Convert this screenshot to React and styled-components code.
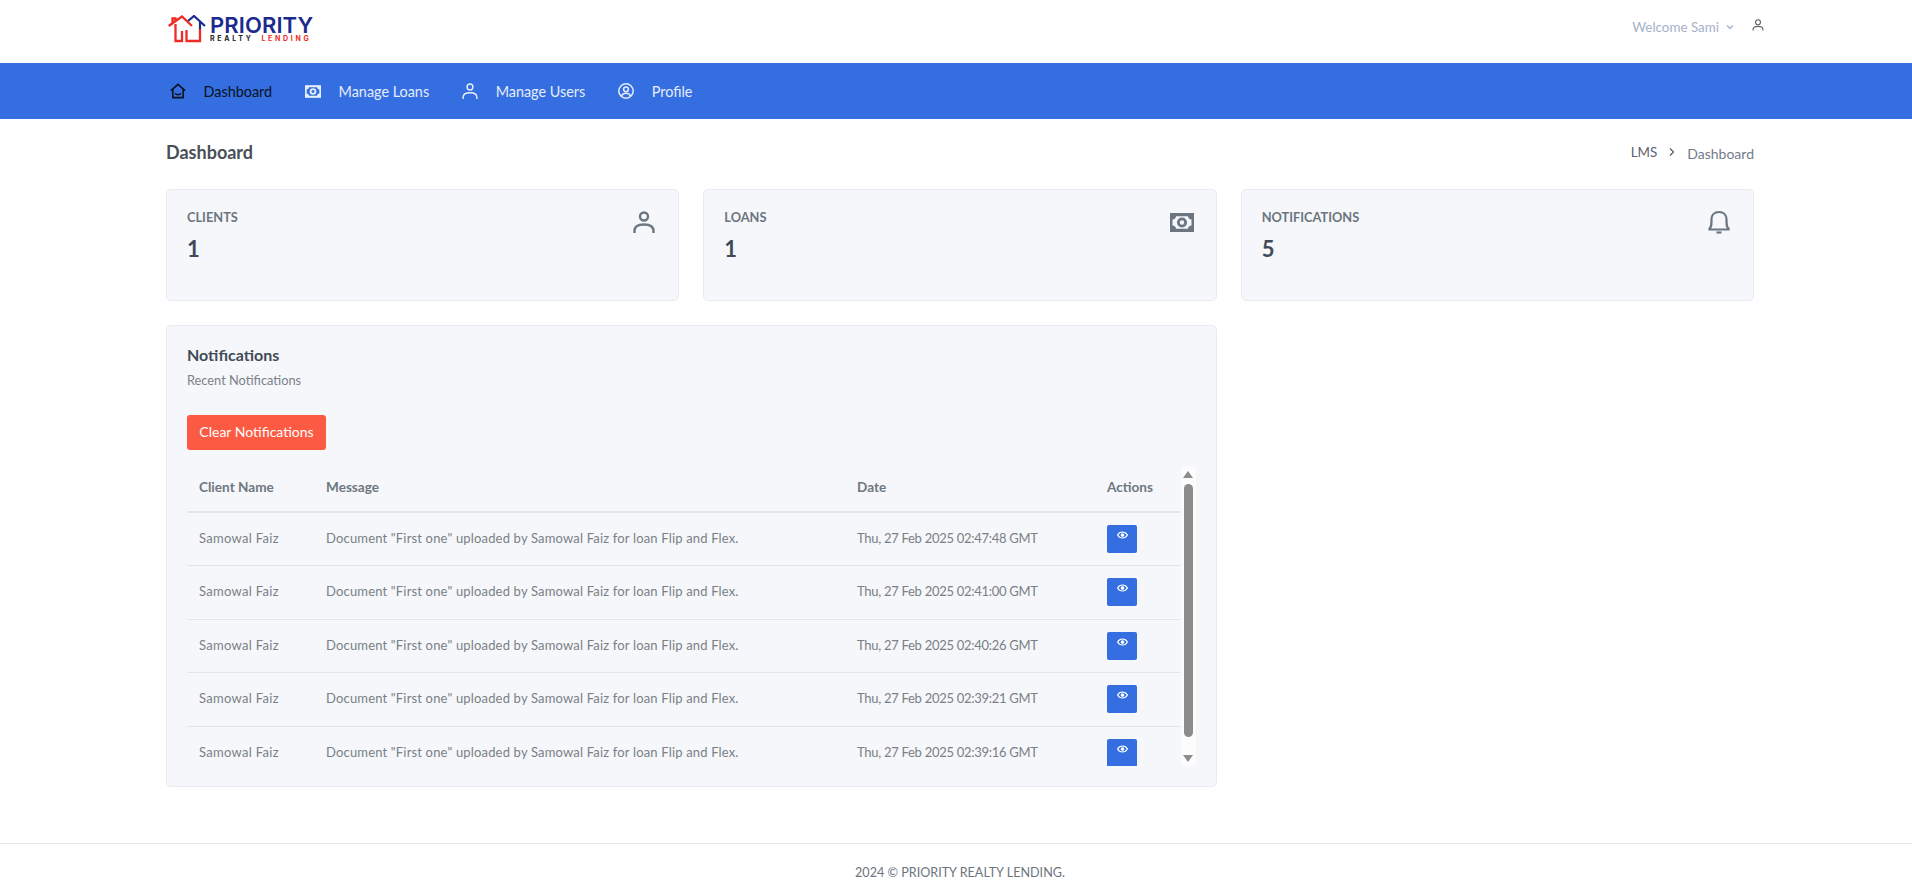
import styled, { createGlobalStyle } from "styled-components";

const GlobalStyle = createGlobalStyle`
  * {
    box-sizing: border-box;
  }
  html, body {
    margin: 0;
    padding: 0;
    background: #fff;
    font-family: "Lato", "Noto Sans", sans-serif;
    color: #6c757d;
  }
`;

const BLUE = "#346ee0";

const Container = styled.div`
  width: 1588px;
  margin-left: 166px;
`;

const TopBar = styled.header`
  height: 63px;
  background: #fff;
`;

const TopRow = styled(Container)`
  height: 100%;
  display: flex;
  align-items: center;
  justify-content: space-between;
`;

const Logo = styled.div`
  display: flex;
  align-items: flex-start;
  gap: 4px;
  margin-left: 2px;
  margin-bottom: 5px;
`;

const LogoWords = styled.div`
  display: flex;
  flex-direction: column;
  margin-top: 1px;
`;

const LogoTitle = styled.span`
  font-family: "Inter", sans-serif;
  font-size: 22px;
  line-height: 18px;
  font-weight: 600;
  letter-spacing: 0.1px;
  color: #1b2a8e;
`;

const LogoSub = styled.span`
  font-family: "Inter", sans-serif;
  font-size: 7px;
  line-height: 8px;
  font-weight: 700;
  letter-spacing: 2.7px;
  color: #222;
  margin-top: 1px;

  b {
    color: #ee2b25;
    font-weight: 700;
    margin-left: 8px;
  }
`;

const UserArea = styled.div`
  display: flex;
  align-items: center;
  margin-right: -10px;
  padding-bottom: 9px;
  color: #a5b1ca;
  font-size: 13.4px;
`;

const Welcome = styled.span`
  margin-right: 6px;
`;

const UserIcon = styled.span`
  display: flex;
  margin-left: 17px;
  margin-top: -5px;
`;

const NavBar = styled.nav`
  height: 56px;
  background: ${BLUE};
`;

const NavRow = styled(Container)`
  height: 100%;
  display: flex;
  align-items: center;
  padding-left: 4px;
`;

const NavItem = styled.a`
  display: flex;
  align-items: center;
  gap: 17.5px;
  margin-right: 33px;
  font-size: 14.4px;
  color: ${({ $active }) => ($active ? "#0b1220" : "#e6edfb")};
`;

const TitleRow = styled(Container)`
  height: 70px;
  display: flex;
  align-items: center;
  justify-content: space-between;
  padding-bottom: 4px;
`;

const PageTitle = styled.h1`
  margin: 0;
  font-size: 18px;
  font-weight: 700;
  color: #495057;
`;

const Crumbs = styled.div`
  display: flex;
  align-items: center;
  font-size: 14px;
  gap: 11px;
`;

const CrumbRoot = styled.span`
  font-size: 13.4px;
  color: #5c6470;
`;

const CrumbLast = styled.span`
  color: #727b8a;
  margin-top: 2px;
`;

const Grid = styled(Container)`
  display: grid;
  grid-template-columns: repeat(3, 1fr);
  column-gap: 24px;
  row-gap: 24px;
  align-items: start;
`;

const Card = styled.section`
  background: #f5f7fb;
  border: 1px solid #e8ebf2;
  border-radius: 5px;
`;

const StatCard = styled(Card)`
  height: 112px;
  padding: 20px;
  display: flex;
  justify-content: space-between;
  align-items: flex-start;
`;

const StatLabel = styled.div`
  font-size: 12.8px;
  line-height: 16px;
  font-weight: 700;
  color: #6c757d;
  margin-top: -1px;
`;

const StatValue = styled.div`
  font-size: 22px;
  line-height: 26px;
  font-weight: 700;
  color: #414b57;
  margin-top: 11px;
`;

const StatIcon = styled.div`
  display: flex;
  color: #6b7680;
  margin-top: ${({ $top }) => $top}px;
  margin-right: ${({ $right }) => $right}px;
`;

const TableCard = styled(Card)`
  grid-column: span 2;
  height: 462px;
  padding: 19px 20px 20px;
`;

const CardTitle = styled.h2`
  margin: 0;
  font-size: 16px;
  line-height: 20px;
  font-weight: 700;
  color: #414b57;
`;

const CardSub = styled.p`
  margin: 6px 0 0;
  font-size: 12.8px;
  line-height: 18px;
  color: #7a828a;
`;

const ClearButton = styled.button`
  display: block;
  width: 139px;
  height: 35px;
  margin-top: 26px;
  padding: 0 0 2px;
  border: 0;
  border-radius: 3px;
  background: #fd5a43;
  color: #fff;
  font-family: inherit;
  font-size: 14px;
`;

const TableWrap = styled.div`
  display: flex;
  height: 300px;
  margin-top: 16px;
`;

const Viewport = styled.div`
  flex: 1;
  overflow: hidden;
`;

const Table = styled.table`
  width: 100%;
  border-collapse: collapse;
  table-layout: fixed;

  tbody tr:nth-child(odd) td {
    height: 53px;
  }
`;

const HeadCell = styled.th`
  height: 46px;
  padding: 0 12px 3px;
  text-align: left;
  font-size: 13.6px;
  font-weight: 700;
  color: #6f7780;
  border-bottom: 2px solid #e2e5ea;
`;

const Cell = styled.td`
  height: 54px;
  padding: 0 12px 2px;
  font-size: 13px;
  letter-spacing: ${({ $spacing }) => $spacing}px;
  color: #7a8085;
  border-bottom: 1px solid #e2e5ea;
`;

const EyeButton = styled.button`
  display: flex;
  justify-content: center;
  width: 30px;
  height: 28px;
  margin-top: 2px;
  padding: 6px 0 0;
  border: 0;
  border-radius: 2px;
  background: ${BLUE};
  color: #fff;
`;

const ScrollTrack = styled.div`
  width: 15px;
  display: flex;
  flex-direction: column;
  align-items: center;
  background: #fcfcfc;
`;

const ScrollThumb = styled.div`
  flex: 1;
  width: 9px;
  margin: 6.5px 0 17.5px;
  border-radius: 5px;
  background: #8c8c8c;
`;

const ScrollArrow = styled.div`
  width: 0;
  height: 0;
  margin: ${({ $down }) => ($down ? "0 0 4.5px" : "4.5px 0 0")};
  border-left: 5px solid transparent;
  border-right: 5px solid transparent;
  ${({ $down }) =>
    $down ? "border-top: 7px solid #8c8c8c;" : "border-bottom: 7px solid #8c8c8c;"}
`;

const Footer = styled.footer`
  margin-top: 56px;
  height: 53px;
  padding: 4px 0 0 8px;
  border-top: 1px solid #e3e5e9;
  display: flex;
  align-items: center;
  justify-content: center;
  font-size: 12.6px;
  color: #6c757d;
`;

const HouseLogo = () => (
  <svg width="38" height="28" viewBox="0 0 38 28" fill="none">
    <path d="M20 6 L26 1 L37 11 M32 7 V15" stroke="#1b2a8e" strokeWidth="2.2" />
    <path
      d="M0.7 11 L14 1.5 L24 11 M4.5 8 V3.5 H7.5 V6 M7.5 9 V26 H14 V16 M18.5 15 V26 H32 V14"
      stroke="#ee2b25"
      strokeWidth="2.3"
    />
  </svg>
);

const HomeSmile = () => (
  <svg width="16" height="16" viewBox="0 0 17 16" fill="none" stroke="#0b1220" strokeWidth="1.7">
    <path d="M1 7.5 L8.5 1 L16 7.5 M3 6.5 V15 H14 V6.5" />
    <path d="M5.5 10.5 C6.8 12.5 10.2 12.5 11.5 10.5" />
  </svg>
);

const Money = ({ width, height, color, hole }) => (
  <svg width={width} height={height} viewBox="0 0 24 19">
    <rect width="24" height="19" fill={color} />
    <path
      d="M6 3.3 H18 C18 5 19.5 6.5 21.5 6.5 V12.5 C19.5 12.5 18 14 18 15.7 H6 C6 14 4.5 12.5 2.5 12.5 V6.5 C4.5 6.5 6 5 6 3.3 Z"
      fill={hole}
    />
    <circle cx="12" cy="9.5" r="5" fill={color} />
    <circle cx="12" cy="9.5" r="2.2" fill={hole} />
  </svg>
);

const Person = ({ size, strokeWidth = 2 }) => (
  <svg width={size} height={size} viewBox="0 0 22 22" fill="none" stroke="currentColor" strokeWidth={strokeWidth}>
    <circle cx="11" cy="5.5" r="4" />
    <path d="M1.5 22 V20 C1.5 15.5 5 13.5 11 13.5 C17 13.5 20.5 15.5 20.5 20 V22" />
  </svg>
);

const ProfileCircle = () => (
  <svg width="16" height="16" viewBox="0 0 16 16" fill="none" stroke="#e6edfb" strokeWidth="1.5">
    <circle cx="8" cy="8" r="7.2" />
    <circle cx="8" cy="6.3" r="2.4" />
    <path d="M3.6 13 C4.5 10.8 6 10.3 8 10.3 C10 10.3 11.5 10.8 12.4 13" />
  </svg>
);

const Bell = () => (
  <svg width="22" height="24" viewBox="0 0 22 24" fill="none" stroke="currentColor" strokeWidth="2.2">
    <path d="M1.5 18.5 C3.5 17 3.5 15 3.5 9.5 C3.5 5 6.5 2 11 2 C15.5 2 18.5 5 18.5 9.5 C18.5 15 18.5 17 20.5 18.5 V19.5 H1.5 Z" />
    <path d="M8.5 22.5 H13.5" />
  </svg>
);

const Eye = () => (
  <svg width="11" height="8" viewBox="0 0 11 8" fill="none" stroke="currentColor" strokeWidth="1.2">
    <path d="M0.6 4 C2.8 0 8.2 0 10.4 4 C8.2 8 2.8 8 0.6 4 Z" />
    <circle cx="5.5" cy="4" r="1.2" fill="currentColor" />
  </svg>
);

const Chevron = ({ color, size }) => (
  <svg width={size} height={size} viewBox="0 0 10 10" fill="none" stroke={color} strokeWidth="1.4">
    <path d="M2 3.5 L5 6.5 L8 3.5" />
  </svg>
);

const ChevronRight = () => (
  <svg width="8" height="10" viewBox="0 0 8 10" fill="none" stroke="#5c6470" strokeWidth="1.3">
    <path d="M2 1.5 L5.5 5 L2 8.5" />
  </svg>
);

const navItems = [
  { label: "Dashboard", icon: <HomeSmile />, active: true },
  { label: "Manage Loans", icon: <Money width={16} height={13} color="#e6edfb" hole={BLUE} /> },
  { label: "Manage Users", icon: <Person size={16} strokeWidth={2} /> },
  { label: "Profile", icon: <ProfileCircle /> },
];

const dates = [
  "Thu, 27 Feb 2025 02:47:48 GMT",
  "Thu, 27 Feb 2025 02:41:00 GMT",
  "Thu, 27 Feb 2025 02:40:26 GMT",
  "Thu, 27 Feb 2025 02:39:21 GMT",
  "Thu, 27 Feb 2025 02:39:16 GMT",
];

const App = () => {
  return (
    <>
      <GlobalStyle />
      <TopBar>
        <TopRow>
          <Logo>
            <HouseLogo />
            <LogoWords>
              <LogoTitle>PRIORITY</LogoTitle>
              <LogoSub>
                REALTY<b>LENDING</b>
              </LogoSub>
            </LogoWords>
          </Logo>
          <UserArea>
            <Welcome>Welcome Sami</Welcome>
            <Chevron color="#a5b1ca" size={10} />
            <UserIcon>
              <svg width="12" height="12" viewBox="0 0 22 22" fill="none" stroke="#5a6068" strokeWidth="2">
                <circle cx="11" cy="6" r="4.5" />
                <path d="M2 21 V19 C2 15.5 6 13.5 11 13.5 C16 13.5 20 15.5 20 19 V21" />
              </svg>
            </UserIcon>
          </UserArea>
        </TopRow>
      </TopBar>

      <NavBar>
        <NavRow>
          {navItems.map((item) => (
            <NavItem key={item.label} $active={item.active}>
              {item.icon}
              <span>{item.label}</span>
            </NavItem>
          ))}
        </NavRow>
      </NavBar>

      <TitleRow>
        <PageTitle>Dashboard</PageTitle>
        <Crumbs>
          <CrumbRoot>LMS</CrumbRoot>
          <ChevronRight />
          <CrumbLast>Dashboard</CrumbLast>
        </Crumbs>
      </TitleRow>

      <Grid>
        <StatCard>
          <div>
            <StatLabel>CLIENTS</StatLabel>
            <StatValue>1</StatValue>
          </div>
          <StatIcon $top={1} $right={3}>
            <Person size={22} strokeWidth={2.4} />
          </StatIcon>
        </StatCard>
        <StatCard>
          <div>
            <StatLabel>LOANS</StatLabel>
            <StatValue>1</StatValue>
          </div>
          <StatIcon $top={3} $right={2}>
            <Money width={24} height={19} color="#6b7680" hole="#f5f7fb" />
          </StatIcon>
        </StatCard>
        <StatCard>
          <div>
            <StatLabel>NOTIFICATIONS</StatLabel>
            <StatValue>5</StatValue>
          </div>
          <StatIcon $top={0} $right={3}>
            <Bell />
          </StatIcon>
        </StatCard>

        <TableCard>
          <CardTitle>Notifications</CardTitle>
          <CardSub>Recent Notifications</CardSub>
          <ClearButton>Clear Notifications</ClearButton>
          <TableWrap>
            <Viewport>
              <Table>
                <colgroup>
                  <col width="127" />
                  <col width="531" />
                  <col width="250" />
                  <col width="86" />
                </colgroup>
                <thead>
                  <tr>
                    <HeadCell>Client Name</HeadCell>
                    <HeadCell>Message</HeadCell>
                    <HeadCell>Date</HeadCell>
                    <HeadCell>Actions</HeadCell>
                  </tr>
                </thead>
                <tbody>
                  {dates.map((date) => (
                    <tr key={date}>
                      <Cell $spacing={0.3}>Samowal Faiz</Cell>
                      <Cell $spacing={0.17}>Document "First one" uploaded by Samowal Faiz for loan Flip and Flex.</Cell>
                      <Cell $spacing={-0.28}>{date}</Cell>
                      <Cell $spacing={0}>
                        <EyeButton>
                          <Eye />
                        </EyeButton>
                      </Cell>
                    </tr>
                  ))}
                </tbody>
              </Table>
            </Viewport>
            <ScrollTrack>
              <ScrollArrow />
              <ScrollThumb />
              <ScrollArrow $down />
            </ScrollTrack>
          </TableWrap>
        </TableCard>
      </Grid>

      <Footer>2024 © PRIORITY REALTY LENDING.</Footer>
    </>
  );
};

export default App;
